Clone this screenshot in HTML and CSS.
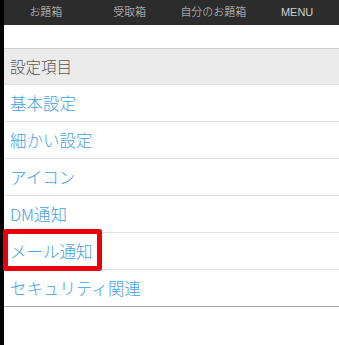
FILE: index.html
```html
<!DOCTYPE html>
<html lang="ja">
<head>
  <meta charset="UTF-8">
  <meta name="viewport" content="width=device-width, initial-scale=1.0">
  <title>設定</title>
  <link rel="stylesheet" href="styles.css">
</head>
<body>
  <div class="page">
    <header class="topbar">
      <a href="#">お題箱</a>
      <a href="#">受取箱</a>
      <a href="#">自分のお題箱</a>
      <a href="#">MENU</a>
    </header>

    <div class="spacer"></div>

    <div class="section-title">設定項目</div>
    <ul class="menu">
      <li><a href="#">基本設定</a></li>
      <li><a href="#">細かい設定</a></li>
      <li><a href="#">アイコン</a></li>
      <li><a href="#">DM通知</a></li>
      <li class="marked"><a href="#">メール通知</a><span class="mark"></span></li>
      <li><a href="#">セキュリティ関連</a></li>
    </ul>
  </div>
</body>
</html>
```

FILE: styles.css
```css
body {
  margin: 0;
  padding: 0;
  font-family: "Noto Sans CJK JP", "Noto Sans", sans-serif;
  font-weight: 300;
  background-color: #fff;
}

.page {
  border-left: 4px solid #000;
  min-height: 345px;
  box-sizing: border-box;
}

.topbar {
  display: grid;
  grid-template-columns: repeat(4, 1fr);
  height: 25px;
  align-items: center;
  background-color: #2c2c2c;
}

.topbar a {
  text-align: center;
  color: #d0d0d0;
  text-decoration: none;
  font-size: 11px;
  line-height: 1;
  font-family: "Liberation Sans", "Noto Sans CJK JP", sans-serif;
}

.spacer {
  height: 23px;
  border-bottom: 1px solid #cfcfcf;
}

.section-title {
  height: 35px;
  line-height: 35px;
  padding-left: 6px;
  background-color: #ebebeb;
  border-bottom: 1px solid #e0e0e0;
  color: #555;
  font-size: 15.5px;
}

.menu {
  list-style: none;
  margin: 0;
  padding: 0;
}

.menu li {
  position: relative;
  height: 36px;
  line-height: 36px;
  padding-left: 6px;
  border-bottom: 1px solid #e2e2e2;
}

.menu li:last-child {
  border-bottom-color: #a8a8a8;
}

.menu a {
  color: #45a2dc;
  text-decoration: none;
  font-size: 16.5px;
}

/* 注目の枠 */
.mark {
  position: absolute;
  left: -1px;
  top: -4px;
  width: 89px;
  height: 32px;
  border: 5px solid #e8000b;
  border-radius: 3px;
}
```
